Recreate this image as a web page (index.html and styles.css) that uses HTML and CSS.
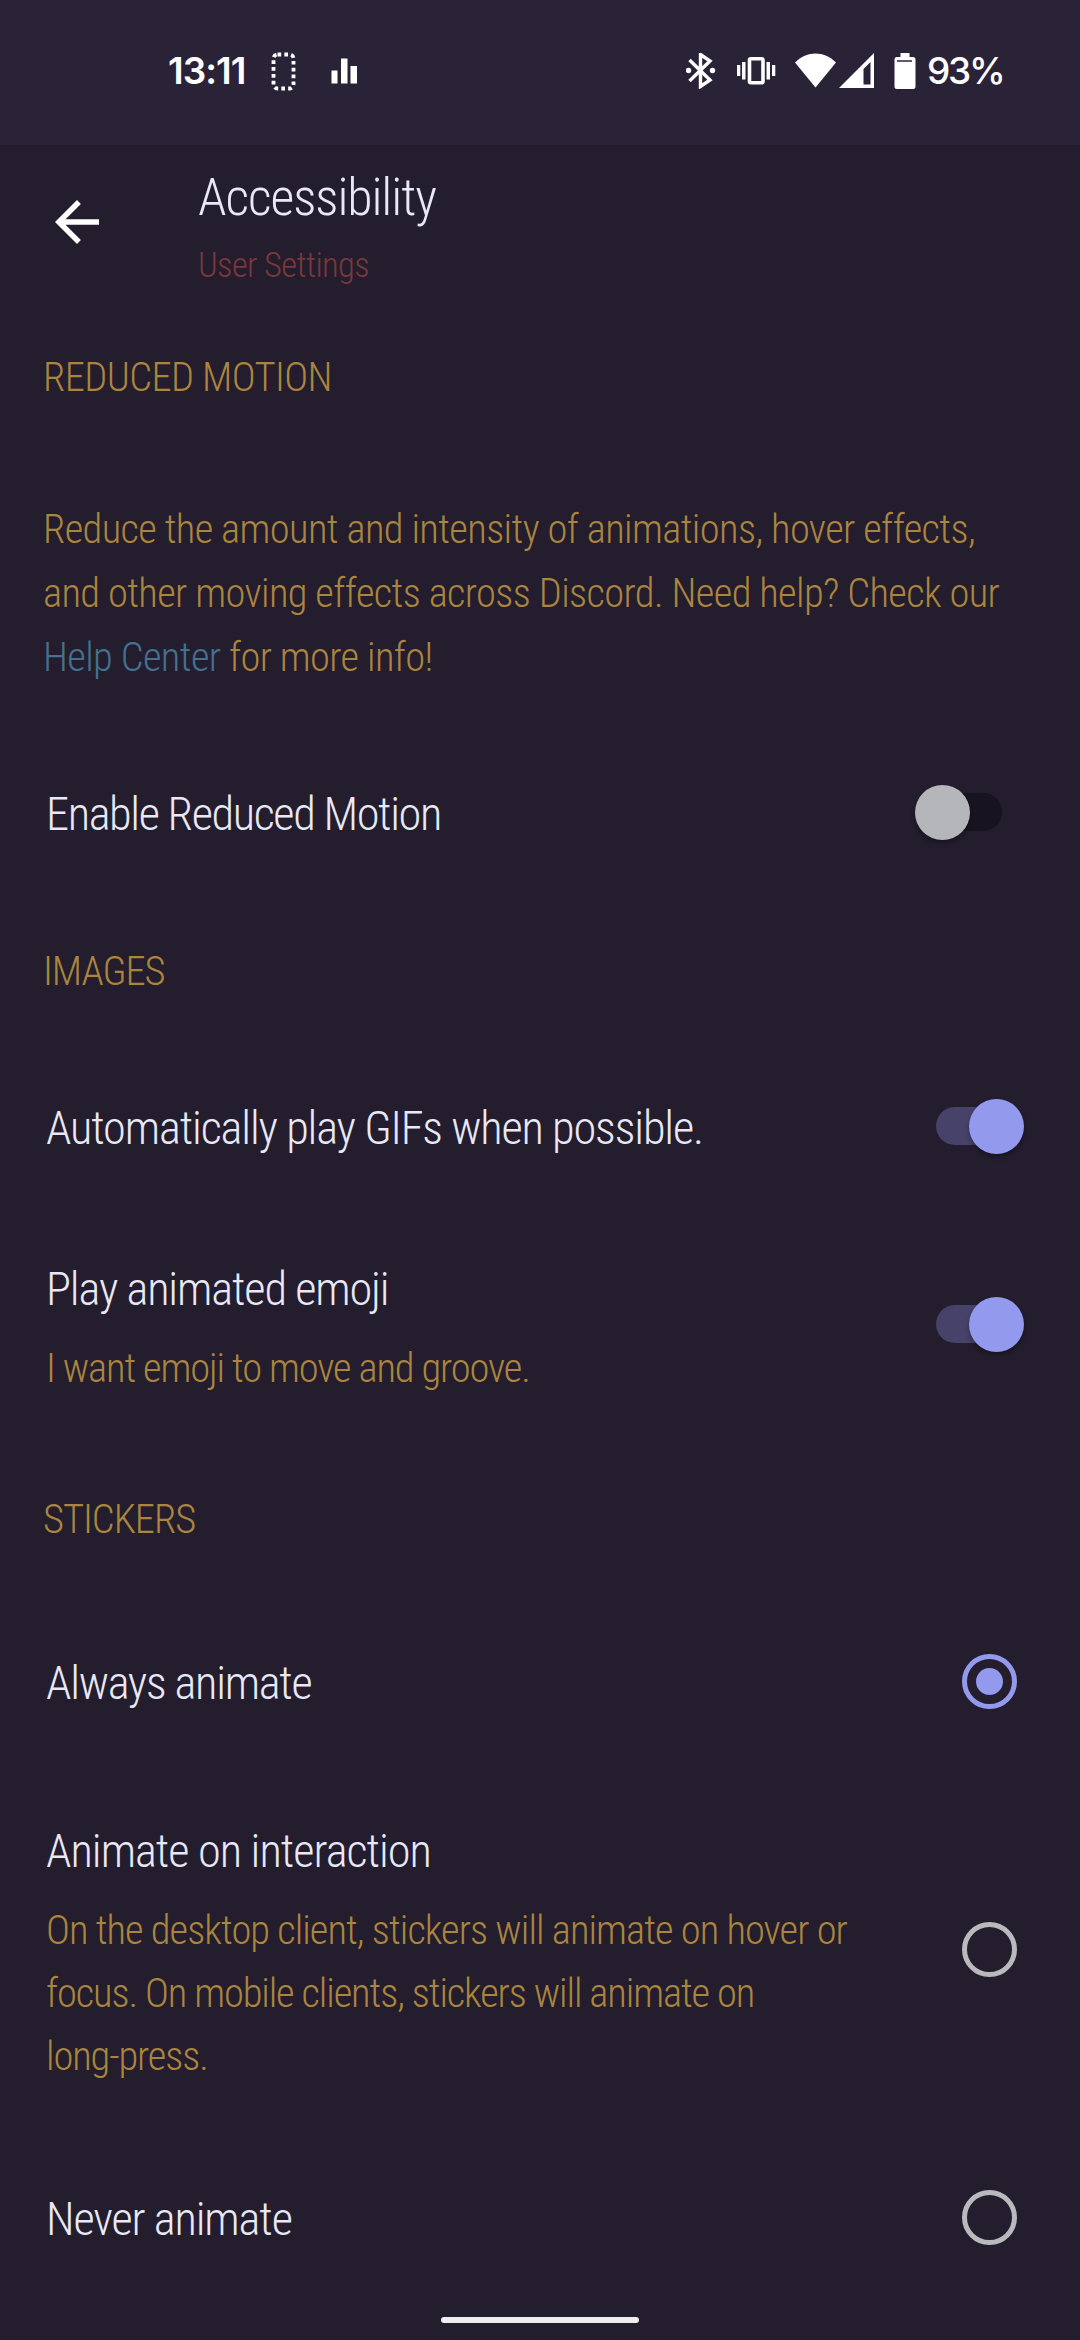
FILE: index.html
```html
<!DOCTYPE html>
<html lang="en">
<head>
<meta charset="utf-8">
<title>Accessibility</title>
<link rel="stylesheet" href="styles.css">
</head>
<body>
<header class="status">
  <span class="clock">13:11</span>
  <svg width="26" height="40" viewBox="270 51 26 40"><rect x="273.500" y="54.500" width="20" height="34" rx="4" fill="none" stroke="#fff" stroke-width="3.800" stroke-dasharray="3.700 3.140"/></svg>
  <svg class="i-bars" width="26" height="26" viewBox="331 58.500 26 26"><path fill="#fff" d="M331.500 71h6v13h-6zM341 59h6.500v25H341zM350.500 66.500h6.500V84h-6.500z"/></svg>
  <span class="grow"></span>
  <svg width="30" height="36" viewBox="686 53 30 36"><path d="M689.500 60l20.500 20-9.500 6.500v-32l9.500 6.500-20.500 20" fill="none" stroke="#fff" stroke-width="3.400"/><circle cx="688.500" cy="70.500" r="2.700" fill="#fff"/><circle cx="712.500" cy="70.500" r="2.700" fill="#fff"/></svg>
  <svg class="i-vib" width="39" height="28" viewBox="737 57 39 28"><rect x="749.500" y="58.800" width="13.500" height="24" rx="1.500" fill="none" stroke="#fff" stroke-width="3.600"/><path fill="#fff" d="M737 65h3.300v11H737zM742 62h3.500v17.500H742zM766.500 62h3.500v17.500h-3.500zM772 65h3.300v11H772z"/></svg>
  <svg class="i-wifi" width="42" height="36" viewBox="795 53 42 36"><path fill="#fff" d="M795 62.500C807 50.500 824 50.500 836 62.500L815.500 87.500z"/></svg>
  <svg class="i-sig" width="36" height="36" viewBox="839 53 36 36"><path fill="#fff" fill-rule="evenodd" d="M839 88L874 53v35zM863.500 69v15.500h7V62z"/></svg>
  <svg class="i-bat" width="22" height="36" viewBox="894 53 22 36"><path fill="#fff" d="M900.500 53h9v4h3.500a2.500 2.500 0 0 1 2.500 2.500v27a2.500 2.500 0 0 1-2.500 2.500h-16a2.500 2.500 0 0 1-2.500-2.500v-27a2.500 2.500 0 0 1 2.500-2.500h3.500z"/><path stroke="#2a2338" stroke-width="1.500" d="M897 61h15"/></svg>
  <span class="percent">93%</span>
</header>
<div class="appbar">
  <svg class="back" width="66" height="66" viewBox="0 0 24 24"><path fill="#fff" d="M20 11H7.830l5.590-5.590L12 4l-8 8 8 8 1.410-1.410L7.830 13H20v-2z"/></svg>
  <div class="titles">
    <h1>Accessibility</h1>
    <p>User Settings</p>
  </div>
</div>
<main>
  <h2 class="wide">REDUCED MOTION</h2>
  <p class="intro">Reduce the amount and intensity of animations, hover effects,<br>
    and other moving effects across Discord. Need help? Check our<br>
    <a>Help Center</a> for more info!</p>
  <div class="row motion"><div class="label">Enable Reduced Motion</div><div class="toggle"></div></div>
  <h2>IMAGES</h2>
  <div class="row gifs"><div class="label">Automatically play GIFs when possible.</div><div class="toggle on"></div></div>
  <div class="row emoji"><div><div class="label">Play animated emoji</div><div class="desc">I want emoji to move and groove.</div></div><div class="toggle on"></div></div>
  <h2>STICKERS</h2>
  <div class="row always"><div class="label">Always animate</div><div class="radio on"></div></div>
  <div class="row interact"><div><div class="label">Animate on interaction</div><div class="desc"><span class="first">On the desktop client, stickers will animate on hover or</span><br>focus. On mobile clients, stickers will animate on<br>long-press.</div></div><div class="radio"></div></div>
  <div class="row never"><div class="label">Never animate</div><div class="radio"></div></div>
</main>
<div class="pill"></div>
</body>
</html>
```
FILE: styles.css
```css
* { box-sizing: border-box; }
body {
  margin: 0;
  width: 1080px;
  height: 2340px;
  overflow: hidden;
  display: flex;
  flex-direction: column;
  background: #231d2d;
  color: #e8e8f6;
  font-family: Roboto, sans-serif;
  font-weight: 350;
  font-stretch: 75%;
  white-space: nowrap;
}
h1, h2, p { margin: 0; font-weight: inherit; }

.status {
  height: 145px;
  flex: none;
  display: flex;
  align-items: center;
  padding: 0 78px 4px 168px;
  background: #2a2338;
  color: #fff;
  font: 600 37px/44px Inter, sans-serif;
}
.status svg { flex: none; }
.clock { width: 102px; letter-spacing: -1px; }
.percent { width: 75px; font-weight: 500; letter-spacing: -2.2px; }
.grow { flex: 1; }
.i-bars { margin-left: 35px; }
.i-vib { margin-left: 21px; }
.i-wifi { margin-left: 19px; }
.i-sig { margin-left: 2px; }
.i-bat { margin: 0 11px 0 19px; }

.appbar {
  height: 200px;
  flex: none;
  display: flex;
  padding: 21px 0 0 44px;
}
.back { margin-top: 23px; }
.titles { margin-left: 88px; }
h1 { font-size: 52px; line-height: 64px; letter-spacing: -1.1px; }
.titles p { margin-top: 13px; font-size: 34.5px; line-height: 44px; letter-spacing: -.6px; color: #7b383a; }

h2, .intro, .desc { font-size: 40.5px; line-height: 64px; color: #ab853f; }
h2, .intro { padding-left: 43px; }
h2 { letter-spacing: -1.05px; }
.wide { letter-spacing: -.6px; }
.intro { margin-top: 88px; letter-spacing: -.63px; }
.intro a { color: #46708f; }
.desc { letter-spacing: -1.12px; }
.desc .first { letter-spacing: -.95px; }

.row {
  display: flex;
  justify-content: space-between;
  align-items: center;
  padding-left: 46px;
}
.label { font-size: 46.4px; line-height: 64px; letter-spacing: -1.15px; }
.motion { margin: 93px 0; }
.motion .label { letter-spacing: -1.4px; }
.gifs { margin-top: 93px; }
.emoji { margin: 97px 0 87px; }
.emoji .desc { margin-top: 15px; }
.always { margin-top: 100px; }
.always .label { letter-spacing: -1.3px; }
.interact { margin: 104px 0 99px; }
.interact .label { letter-spacing: -1px; }
.interact .desc { margin-top: 16px; line-height: 63px; }

.toggle {
  width: 109px;
  height: 56px;
  margin: 0 56px 4px 0;
  padding: 0 21px;
  display: flex;
  align-items: center;
}
.toggle::before {
  content: "";
  width: 66px;
  height: 38px;
  flex: none;
  border-radius: 19px;
  background: #171320;
}
.toggle::after {
  content: "";
  width: 55px;
  height: 55px;
  flex: none;
  margin-left: -87px;
  border-radius: 50%;
  background: #b5b6ba;
  box-shadow: 0 3px 5px rgba(0, 0, 0, .3);
}
.toggle.on::before { background: #46426a; }
.toggle.on::after { margin-left: -33px; background: #9399ed; }
.emoji .toggle { margin-bottom: 9px; }
.radio {
  width: 55px;
  height: 55px;
  margin: 0 63.5px 4px 0;
  display: grid;
  place-items: center;
  border: 5.500px solid #b9babd;
  border-radius: 50%;
}
.radio.on { border-color: #9399ed; }
.radio.on::before { content: ""; width: 27px; height: 27px; border-radius: 50%; background: #9399ed; }
.interact .radio { margin-bottom: 9px; }

.pill { width: 198px; height: 6px; margin: 66px auto 0; border-radius: 3px; background: #eee; }
```
